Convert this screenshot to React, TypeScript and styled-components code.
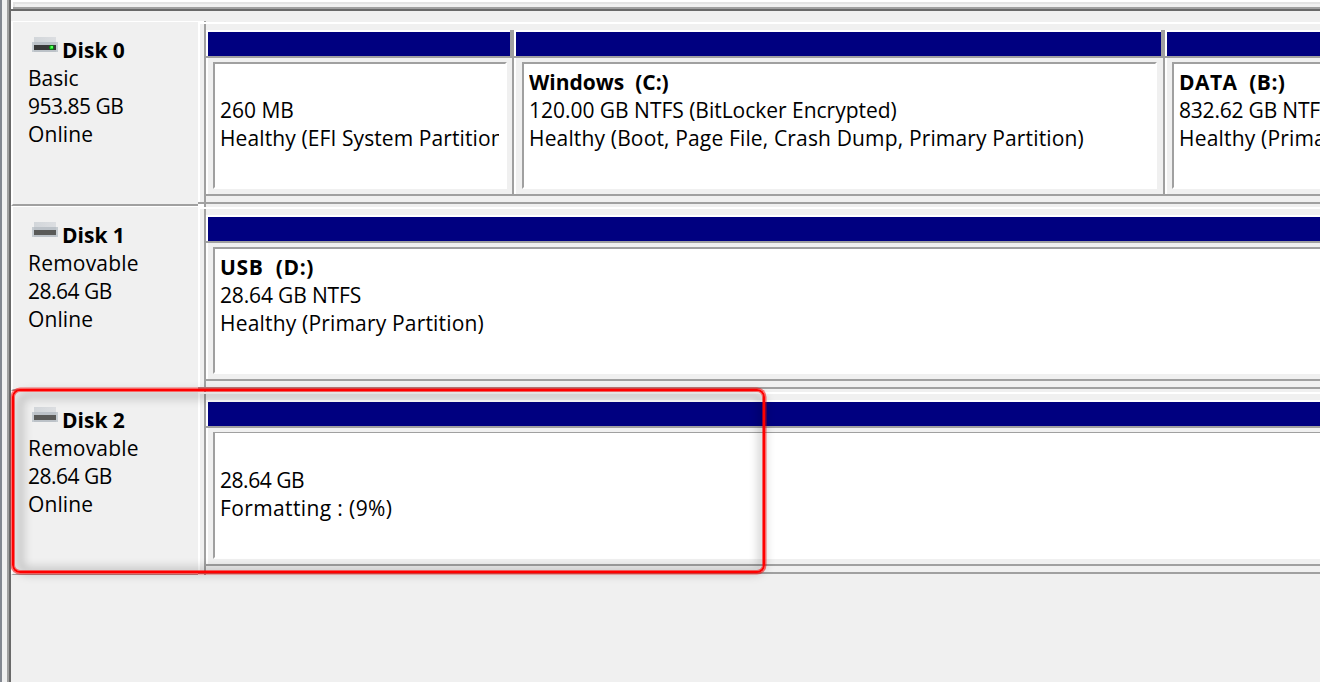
import React from "react";
import styled, { createGlobalStyle, css } from "styled-components";

const FACE = "#f0f0f0";
const SHADOW = "#a0a0a0";
const DARK = "#696969";
const NAVY = "#000080";

const GlobalStyle = createGlobalStyle`
  body {
    margin: 0;
    background: ${FACE};
  }
  * {
    box-sizing: border-box;
  }
`;

const Window = styled.div`
  position: relative;
  display: flex;
  width: 1320px;
  height: 682px;
  overflow: hidden;
  background: ${FACE};
  color: #000;
  font-family: "Open Sans", "Liberation Sans", sans-serif;
  font-size: 21px;
  line-height: 28px;
`;

const WindowEdge = styled.div`
  flex: none;
  width: 11px;
  border-left: 2px solid #828790;
  border-right: 2px solid ${DARK};
  box-shadow: inset -2px 0 0 ${SHADOW};
`;

const Content = styled.div`
  flex: 1;
  min-width: 0;
  display: flex;
  flex-direction: column;
`;

const UpperPane = styled.div`
  flex: none;
  height: 11px;
  padding-left: 2px;
  background: #fff;
  border-bottom: 2px solid ${DARK};
`;

const UpperPaneTrack = styled.div`
  height: 9px;
  border-top: 2px solid #fff;
  border-bottom: 2px solid ${SHADOW};
  background: ${FACE};
  box-shadow: inset 2px 2px 0 #e3e3e3;
`;

const DiskList = styled.div`
  padding-top: 10px;
`;

const DiskRow = styled.section<{ $last?: boolean }>`
  display: flex;
  height: ${(p) => (p.$last ? 184 : 185)}px;
`;

const DiskInfo = styled.div<{ $last?: boolean }>`
  flex: none;
  width: 187px;
  padding: 14px 0 0 15px;
  border: 0 solid #fff;
  border-top-width: 1px;
  border-left-width: 2px;
  border-bottom: ${(p) => (p.$last ? 1 : 2)}px solid ${SHADOW};
`;

const Gutter = styled.div`
  flex: none;
  width: 6px;
  display: flex;
  flex-direction: column;
  background: #fff;
`;

const GutterFace = styled.div`
  height: 181px;
  border-top: 3px solid #fff;
  border-left: 2px solid #fff;
  background: ${FACE};
`;

const GutterFoot = styled.div`
  height: 2px;
  background: ${SHADOW};
`;

const Divider = styled.div`
  flex: none;
  width: 2px;
  background: linear-gradient(${SHADOW} 1px, #fff 1px 3px, ${SHADOW} 3px);
`;

const Graph = styled.div`
  flex: 1;
  min-width: 0;
  display: flex;
  flex-direction: column;
  padding-top: 1px;
`;

const VolumeStrip = styled.div`
  flex: none;
  display: flex;
  height: 182px;
  padding: 6px 0;
  border-top: 2px solid #fff;
  border-bottom: 2px solid ${SHADOW};
  overflow: hidden;
`;

const Volume = styled.div<{ $width?: number }>`
  flex: ${(p) => (p.$width ? "none" : "1")};
  width: ${(p) => (p.$width ? `${p.$width}px` : "auto")};
  min-width: 0;
  display: flex;
  flex-direction: column;
  border-bottom: 2px solid ${SHADOW};
`;

const VolumeBar = styled.div<{ $closed?: boolean }>`
  height: 28px;
  flex: none;
  background: ${NAVY};
  border-bottom: 2px solid ${SHADOW};
  box-shadow: inset 2px 2px 0 #fff;
  ${(p) =>
    p.$closed &&
    css`
      display: flex;
      justify-content: flex-end;
      &::after {
        content: "";
        width: 4px;
        background: ${SHADOW};
      }
    `}
`;

const VolumeFrame = styled.div<{ $closed?: boolean; $left: number; $right: number }>`
  flex: 1;
  display: flex;
  border-left: 2px solid #fff;
  border-right: ${(p) => (p.$closed ? 2 : 0)}px solid ${SHADOW};
  padding: 4px ${(p) => p.$right}px 5px ${(p) => p.$left}px;
`;

const VolumeBody = styled.div<{ $closed?: boolean; $thin?: boolean }>`
  flex: 1;
  min-width: 0;
  padding: ${(p) => (p.$thin ? 5 : 4)}px ${(p) => (p.$closed ? 6 : 0)}px 0 5px;
  background: #fff;
  border-left: 2px solid ${SHADOW};
  border-top: ${(p) => (p.$thin ? 1 : 2)}px solid ${SHADOW};
  border-right: ${(p) => (p.$closed ? 2 : 0)}px solid #fff;
  border-bottom: 2px solid #fff;
`;

const Line = styled.div<{ $tracking?: number; $bold?: boolean }>`
  height: 28px;
  overflow: hidden;
  white-space: pre;
  font-weight: ${(p) => (p.$bold ? 700 : 400)};
  letter-spacing: ${(p) => p.$tracking ?? 0}px;
`;

const DiskTitle = styled.div`
  display: flex;
  gap: 4px;
  padding-left: 4px;
`;

const IconBox = styled.svg`
  flex: none;
  display: block;
  margin-top: 1px;
`;

const HighlightShadow = styled.div`
  position: absolute;
  left: 17px;
  top: 392px;
  width: 748px;
  height: 182px;
  border: 6px solid rgba(0, 0, 0, 0.24);
  border-radius: 10px;
  filter: blur(5px);
`;

const Highlight = styled.div`
  position: absolute;
  left: 12px;
  top: 389px;
  width: 753px;
  height: 184px;
  border: 2px solid #f00;
  border-radius: 8px;
  box-shadow: 0 0 0 1.5px rgba(255, 0, 0, 0.55), inset 0 0 0 1px rgba(255, 0, 0, 0.55);
`;

function DriveIcon({ led }: { led?: boolean }) {
  return (
    <IconBox width="26" height="15" viewBox="0 0 26 15" shapeRendering="crispEdges">
      <defs>
        <linearGradient id="lid" x1="0" x2="1">
          <stop offset="0" stopColor="#d2d6da" />
          <stop offset="1" stopColor="#dcdee1" />
        </linearGradient>
      </defs>
      <path d="M2 0h22v5H2z" fill="url(#lid)" />
      <path d="M0 5h26v10H0z" fill="#c6ccd1" />
      <path d="M2 5h22v3H2zM2 13h22v2H2z" fill="#bcc2c8" />
      <path d="M2 8h22v5H2z" fill={led ? "#393939" : "#5a5a58"} />
      {led && (
        <g>
          <path d="M17 9h5v3h-5zM18 8h3v5h-3z" fill="#0c7a12" />
          <path d="M18 9h3v3h-3z" fill="#22d52a" />
          <path d="M18.5 9h2v2h-2z" fill="#5cff62" />
        </g>
      )}
    </IconBox>
  );
}

type TextLine = { text: string; tracking?: number; bold?: boolean };
type VolumeData = { width?: number; left?: number; right?: number; lines: TextLine[] };
type DiskData = { name: string; led?: boolean; info: TextLine[]; volumes: VolumeData[] };

const blank: TextLine = { text: " " };
const online: TextLine = { text: "Online", tracking: 0.1 };
const removable: TextLine[] = [
  { text: "Removable", tracking: 0.2 },
  { text: "28.64 GB", tracking: -0.5 },
  online,
];

const disks: DiskData[] = [
  {
    name: "Disk 0",
    led: true,
    info: [{ text: "Basic" }, { text: "953.85 GB", tracking: -0.5 }, online],
    volumes: [
      {
        width: 308,
        right: 5,
        lines: [blank, { text: "260 MB" }, { text: "Healthy (EFI System Partition)", tracking: 0.1 }],
      },
      {
        width: 651,
        left: 6,
        right: 6,
        lines: [
          { text: "Windows  (C:)", bold: true },
          { text: "120.00 GB NTFS (BitLocker Encrypted)", tracking: -0.02 },
          { text: "Healthy (Boot, Page File, Crash Dump, Primary Partition)", tracking: 0.15 },
        ],
      },
      {
        lines: [
          { text: "DATA  (B:)", bold: true, tracking: 0.45 },
          { text: "832.62 GB NTFS", tracking: -0.2 },
          { text: "Healthy (Primary Partition)", tracking: 0.18 },
        ],
      },
    ],
  },
  {
    name: "Disk 1",
    info: removable,
    volumes: [
      {
        lines: [
          { text: "USB  (D:)", bold: true, tracking: 0.65 },
          { text: "28.64 GB NTFS", tracking: -0.15 },
          { text: "Healthy (Primary Partition)", tracking: 0.18 },
        ],
      },
    ],
  },
  {
    name: "Disk 2",
    info: removable,
    volumes: [
      {
        lines: [blank, { text: "28.64 GB", tracking: -0.45 }, { text: "Formatting : (9%)", tracking: 0.38 }],
      },
    ],
  },
];

function Lines({ lines }: { lines: TextLine[] }) {
  return (
    <>
      {lines.map((l, i) => (
        <Line key={i} $tracking={l.tracking} $bold={l.bold}>
          {l.text}
        </Line>
      ))}
    </>
  );
}

export default function App() {
  return (
    <Window>
      <GlobalStyle />
      <WindowEdge />
      <Content>
        <UpperPane>
          <UpperPaneTrack />
        </UpperPane>
        <DiskList>
          {disks.map((disk, index) => {
            const last = index === disks.length - 1;
            return (
              <DiskRow key={disk.name} $last={last}>
                <DiskInfo $last={last}>
                  <DiskTitle>
                    <DriveIcon led={disk.led} />
                    <Line $bold>{disk.name}</Line>
                  </DiskTitle>
                  <Lines lines={disk.info} />
                </DiskInfo>
                <Gutter>
                  <GutterFace />
                  <GutterFoot />
                </Gutter>
                <Divider />
                <Graph>
                  <VolumeStrip>
                    {disk.volumes.map((v, i) => {
                      const closed = v.width !== undefined;
                      return (
                        <Volume key={i} $width={v.width}>
                          <VolumeBar $closed={closed} />
                          <VolumeFrame $closed={closed} $left={v.left ?? 5} $right={v.right ?? 0}>
                            <VolumeBody $closed={closed} $thin={last}>
                              <Lines lines={v.lines} />
                            </VolumeBody>
                          </VolumeFrame>
                        </Volume>
                      );
                    })}
                  </VolumeStrip>
                </Graph>
              </DiskRow>
            );
          })}
        </DiskList>
      </Content>
      <HighlightShadow />
      <Highlight />
    </Window>
  );
}
